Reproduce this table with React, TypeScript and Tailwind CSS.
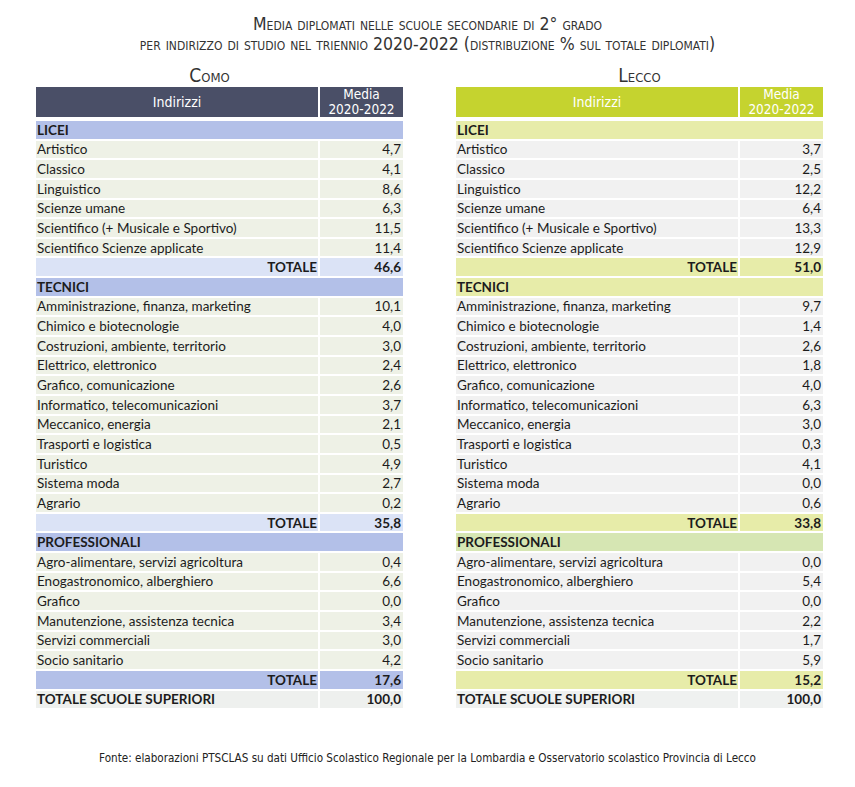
import React from 'react'

type Row = [string, string]

const sections: { title: string; como: Row[]; lecco: Row[]; totCo: string; totLe: string }[] = [
  {
    title: 'LICEI',
    como: [
      ['Artistico', '4,7'],
      ['Classico', '4,1'],
      ['Linguistico', '8,6'],
      ['Scienze umane', '6,3'],
      ['Scientifico (+ Musicale e Sportivo)', '11,5'],
      ['Scientifico Scienze applicate', '11,4'],
    ],
    lecco: [
      ['Artistico', '3,7'],
      ['Classico', '2,5'],
      ['Linguistico', '12,2'],
      ['Scienze umane', '6,4'],
      ['Scientifico (+ Musicale e Sportivo)', '13,3'],
      ['Scientifico Scienze applicate', '12,9'],
    ],
    totCo: '46,6',
    totLe: '51,0',
  },
  {
    title: 'TECNICI',
    como: [
      ['Amministrazione, finanza, marketing', '10,1'],
      ['Chimico e biotecnologie', '4,0'],
      ['Costruzioni, ambiente, territorio', '3,0'],
      ['Elettrico, elettronico', '2,4'],
      ['Grafico, comunicazione', '2,6'],
      ['Informatico, telecomunicazioni', '3,7'],
      ['Meccanico, energia', '2,1'],
      ['Trasporti e logistica', '0,5'],
      ['Turistico', '4,9'],
      ['Sistema moda', '2,7'],
      ['Agrario', '0,2'],
    ],
    lecco: [
      ['Amministrazione, finanza, marketing', '9,7'],
      ['Chimico e biotecnologie', '1,4'],
      ['Costruzioni, ambiente, territorio', '2,6'],
      ['Elettrico, elettronico', '1,8'],
      ['Grafico, comunicazione', '4,0'],
      ['Informatico, telecomunicazioni', '6,3'],
      ['Meccanico, energia', '3,0'],
      ['Trasporti e logistica', '0,3'],
      ['Turistico', '4,1'],
      ['Sistema moda', '0,0'],
      ['Agrario', '0,6'],
    ],
    totCo: '35,8',
    totLe: '33,8',
  },
  {
    title: 'PROFESSIONALI',
    como: [
      ['Agro-alimentare, servizi agricoltura', '0,4'],
      ['Enogastronomico, alberghiero', '6,6'],
      ['Grafico', '0,0'],
      ['Manutenzione, assistenza tecnica', '3,4'],
      ['Servizi commerciali', '3,0'],
      ['Socio sanitario', '4,2'],
    ],
    lecco: [
      ['Agro-alimentare, servizi agricoltura', '0,0'],
      ['Enogastronomico, alberghiero', '5,4'],
      ['Grafico', '0,0'],
      ['Manutenzione, assistenza tecnica', '2,2'],
      ['Servizi commerciali', '1,7'],
      ['Socio sanitario', '5,9'],
    ],
    totCo: '17,6',
    totLe: '15,2',
  },
]

const themes = {
  como: {
    head: 'bg-[#4a4f67]',
    band: ['bg-[#b3c0e8]', 'bg-[#b3c0e8]', 'bg-[#b3c0e8]'],
    total: ['bg-[#dbe3f6]', 'bg-[#dbe3f6]', 'bg-[#b3c0e8]'],
    row: 'bg-[#eef1e6]',
    grand: 'bg-[#eef0ee]',
  },
  lecco: {
    head: 'bg-[#c5d32f]',
    band: ['bg-[#e7eca9]', 'bg-[#e7eca9]', 'bg-[#d6e6b3]'],
    total: ['bg-[#e7eca9]', 'bg-[#e7eca9]', 'bg-[#e7eca9]'],
    row: 'bg-[#f1f1f1]',
    grand: 'bg-[#eff1f0]',
  },
}

const rowH = 'h-[17.65px] mb-[2px]'

function DataTable({ city }: { city: 'como' | 'lecco' }) {
  const t = themes[city]
  return (
    <div className="w-[367px] font-['Lato',sans-serif] text-[13.5px] text-[#1c1c1c]">
      {/* Header */}
      <div className={`flex h-[30px] ${t.head} text-white font-['DejaVu_Sans_Condensed',sans-serif]`}>
        <div className="w-[282px] flex items-center justify-center text-[14px]">Indirizzi</div>
        <div className="w-[2px] bg-white" />
        <div className="flex-1 flex flex-col items-center justify-center text-[13.5px] leading-[15px]">
          <span>Media</span>
          <span>2020-2022</span>
        </div>
      </div>

      <div className="mt-[4px]">
        {sections.map((s, i) => {
          const rows = city === 'como' ? s.como : s.lecco
          return (
            <React.Fragment key={s.title}>
              <div className={`${rowH} ${t.band[i]} flex items-center pl-[1px] font-bold`}>{s.title}</div>
              {rows.map(([name, val]) => (
                <div key={name} className={`${rowH} flex`}>
                  <div className={`w-[282px] ${t.row} flex items-center pl-[1px]`}>{name}</div>
                  <div className="w-[2px]" />
                  <div className={`flex-1 ${t.row} flex items-center justify-end pr-[2px]`}>{val}</div>
                </div>
              ))}
              <div className={`${rowH} flex font-bold`}>
                <div className={`w-[282px] ${t.total[i]} flex items-center justify-end pr-[1px]`}>TOTALE</div>
                <div className="w-[2px]" />
                <div className={`flex-1 ${t.total[i]} flex items-center justify-end pr-[2px]`}>
                  {city === 'como' ? s.totCo : s.totLe}
                </div>
              </div>
            </React.Fragment>
          )
        })}
        <div className={`${rowH} flex font-bold`}>
          <div className={`w-[282px] ${t.grand} flex items-center pl-[1px]`}>TOTALE SCUOLE SUPERIORI</div>
          <div className="w-[2px]" />
          <div className={`flex-1 ${t.grand} flex items-center justify-end pr-[2px]`}>100,0</div>
        </div>
      </div>
    </div>
  )
}

export default function App() {
  return (
    <div className="w-[855px] h-[787px] bg-white flex flex-col items-center font-['DejaVu_Sans_Condensed',sans-serif] text-[#333]">
      {/* Title */}
      <div className="mt-[14px] flex flex-col items-center text-[17.5px] leading-[20px] [font-variant-caps:small-caps]">
        <div>Media diplomati nelle scuole secondarie di 2° grado</div>
        <div>per indirizzo di studio nel triennio 2020-2022 (distribuzione % sul totale diplomati)</div>
      </div>

      <div className="mt-[12px] w-full flex pl-[36px] gap-[53px]">
        <div className="flex flex-col">
          <div className="h-[19px] pr-[20px] text-center text-[19px] leading-[19px] [font-variant-caps:small-caps]">Como</div>
          <div className="mt-[2px]">
            <DataTable city="como" />
          </div>
        </div>
        <div className="flex flex-col">
          <div className="h-[19px] text-center text-[19px] leading-[19px] [font-variant-caps:small-caps]">Lecco</div>
          <div className="mt-[2px]">
            <DataTable city="lecco" />
          </div>
        </div>
      </div>

      {/* Footer */}
      <div className="mt-[40px] text-[11.6px] text-[#222]">
        Fonte: elaborazioni PTSCLAS su dati Ufficio Scolastico Regionale per la Lombardia e Osservatorio scolastico Provincia di Lecco
      </div>
    </div>
  )
}
